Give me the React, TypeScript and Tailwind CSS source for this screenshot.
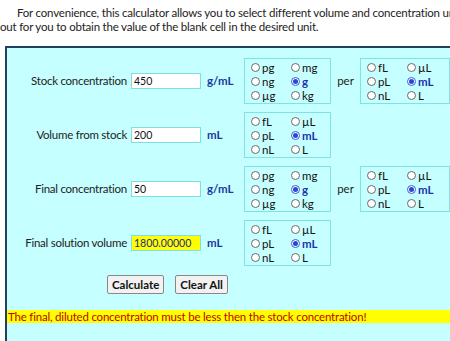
import React from "react";

const font = { fontFamily: "Lato, 'Open Sans', sans-serif" };

type Opt = { label: string; checked?: boolean };

function Radio({ label, checked }: Opt) {
  return (
    <div className="flex items-center gap-[2px] h-[13.5px]">
      {checked ? (
        <span className="w-[9px] h-[9px] rounded-full border border-[#3b5bd6] bg-white flex items-center justify-center">
          <span className="w-[5px] h-[5px] rounded-full bg-[#2448d8]" />
        </span>
      ) : (
        <span className="w-[9px] h-[9px] rounded-full border border-[#6b6b6b] bg-white" />
      )}
      <span className={checked ? "text-[#1c34b0] font-bold" : "text-[#111]"}>{label}</span>
    </div>
  );
}

function Box({ opts, w = "w-[87px]" }: { opts: Opt[]; w?: string }) {
  // 3 rows x 2 cols, filled column by column
  return (
    <div className={`${w} h-[46px] border border-[#7fe3e3] px-[6px] pt-[2px] grid grid-rows-3 grid-flow-col grid-cols-[40px_40px] text-[11.5px] leading-[13px]`}>
      {opts.map((o) => (
        <Radio key={o.label} {...o} />
      ))}
    </div>
  );
}

const mass: Opt[] = [
  { label: "pg" },
  { label: "ng" },
  { label: "µg" },
  { label: "mg" },
  { label: "g", checked: true },
  { label: "kg" },
];

const vol: Opt[] = [
  { label: "fL" },
  { label: "pL" },
  { label: "nL" },
  { label: "µL" },
  { label: "mL", checked: true },
  { label: "L" },
];

function Row({
  label,
  value,
  unit,
  conc,
  highlight,
}: {
  label: string;
  value: string;
  unit: string;
  conc?: boolean;
  highlight?: boolean;
}) {
  return (
    <div className="flex items-center h-[46px]">
      <div className="w-[120px] text-right text-[11.5px] tracking-[-0.25px] text-[#222] whitespace-nowrap">{label}</div>
      <div
        className={`ml-[4px] w-[70px] h-[16px] border border-[#7fdede] text-[10.5px] leading-[14px] pl-[2px] ${
          highlight ? "bg-[#ffff00] text-[#1b2a8a]" : "bg-white text-[#111]"
        }`}
      >
        {value}
      </div>
      <div className="ml-[6px] w-[37px] text-[11.5px] font-bold text-[#1c3a9e]">{unit}</div>
      <Box opts={conc ? mass : vol} />
      {conc && (
        <>
          <div className="w-[29px] text-center text-[11.5px] text-[#222]">per</div>
          <Box opts={vol} w="w-[90px]" />
        </>
      )}
    </div>
  );
}

export default function App() {
  return (
    <div className="w-[450px] h-[341px] overflow-hidden bg-white" style={font}>
      <div className="w-[560px]">
        <div className="text-[11.5px] tracking-[-0.2px] leading-[14px] text-[#222] pt-[6px] whitespace-nowrap">
          <p className="pl-[17px]">
            For convenience, this calculator allows you to select different volume and concentration units and work
          </p>
          <p>out for you to obtain the value of the blank cell in the desired unit.</p>
        </div>
        <div className="mt-[12px] ml-[5px] border-l-2 border-t-2 border-[#23405e] bg-[#c6ffff] h-[320px] pt-[10px]">
          <div className="flex flex-col gap-[8px]">
            <Row label="Stock concentration" value="450" unit="g/mL" conc />
            <Row label="Volume from stock" value="200" unit="mL" />
            <Row label="Final concentration" value="50" unit="g/mL" conc />
            <Row label="Final solution volume" value="1800.00000" unit="mL" highlight />
          </div>
          <div className="flex gap-[11px] ml-[100px] mt-[9px]">
            <button className="h-[19px] px-[4px] border border-[#888] rounded-[2px] bg-[#f2f2f2] text-[11.5px] font-bold text-[#111] leading-[15px]">
              Calculate
            </button>
            <button className="h-[19px] px-[4px] border border-[#888] rounded-[2px] bg-[#f2f2f2] text-[11.5px] font-bold text-[#111] leading-[15px]">
              Clear All
            </button>
          </div>
          <div className="mt-[16px] h-[13px] bg-[#ffff00] text-[11.5px] tracking-[-0.2px] leading-[13px] text-[#c00000] pl-[1px] w-[444px]">
            The final, diluted concentration must be less then the stock concentration!
          </div>
        </div>
      </div>
    </div>
  );
}
